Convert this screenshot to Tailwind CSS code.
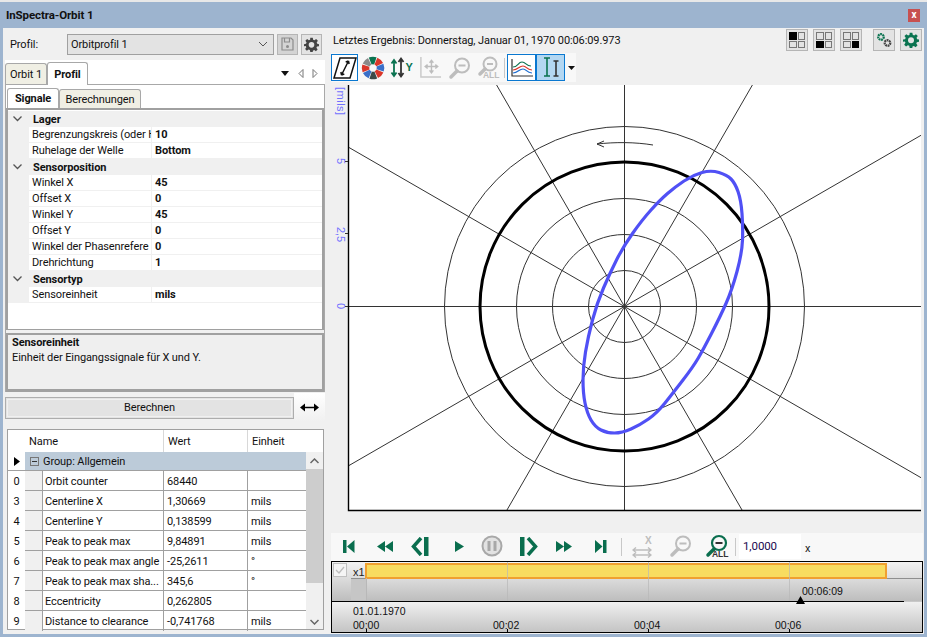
<!DOCTYPE html>
<html lang="de">
<head>
  <meta charset="UTF-8" />
  <title>InSpectra-Orbit 1</title>
  <script src="https://cdn.jsdelivr.net/npm/@tailwindcss/browser@4"></script>
</head>
<body class="m-0 overflow-hidden">
<div class="w-[927px] h-[637px] flex flex-col bg-[#9db4cf] font-['Roboto',sans-serif] text-[11px] tracking-[-0.1px] leading-none text-[#111] overflow-hidden border-t-2 border-t-[#e8e8e8]">

  <!-- Title bar -->
  <div class="h-[26px] shrink-0 flex items-center justify-between pl-[6px] pr-[7px]">
    <span class="font-bold text-[11.5px] mt-[1px]">InSpectra-Orbit 1</span>
    <span class="w-[12px] h-[13px] bg-[#c75050] text-white text-[10px] font-bold flex items-center justify-center">x</span>
  </div>

  <!-- Body -->
  <div class="flex-1 mx-[3px] mb-[3px] bg-[#f0f0f0] flex min-h-0">

    <!-- Left column -->
    <div class="w-[323px] shrink-0 pl-[2px] pr-[1px] flex flex-col">
      <div class="h-[32px] shrink-0 flex items-center gap-[2px]">
        <span class="w-[60px] pl-[5px]">Profil:</span>
        <div class="w-[207px] h-[21px] bg-[#e3e3e3] border border-[#a0a0a0] flex items-center justify-between pl-[3px] pr-[5px]">
          <span>Orbitprofil 1</span>
          <svg width="10" height="6" viewBox="0 0 10 6"><path d="M1 1l4 4 4-4" fill="none" stroke="#555" stroke-width="1"/></svg>
        </div>
        <div class="w-[21px] h-[21px] bg-[#d4d4d4] border border-[#b5b5b5] flex items-center justify-center ml-[1px]">
          <svg width="13" height="14" viewBox="0 0 13 14"><path d="M1 1h9l2 2v10H1z M3.500 1v4h5V1" fill="none" stroke="#8c8c8c" stroke-width="1.200"/><circle cx="6.500" cy="9.500" r="1.500" fill="#8c8c8c"/></svg>
        </div>
        <div class="w-[21px] h-[21px] bg-[#e3e3e3] border border-[#b5b5b5] flex items-center justify-center ml-[1px]">
          <svg width="15" height="15" viewBox="0 0 24 24"><path fill="#444" d="M10 1h4l.6 3.200 2.100.9 2.700-1.900 2.800 2.800-1.900 2.700.9 2.100L24 11.400v3.200l-3.200.6-.9 2.100 1.900 2.700-2.800 2.800-2.700-1.900-2.100.9L14 24h-4l-.6-3.200-2.100-.9-2.700 1.900-2.800-2.800 1.900-2.700-.9-2.100L0 14.600v-3.200l3.200-.6.9-2.100L2.200 6l2.800-2.800 2.700 1.900 2.100-.9z"/><circle cx="12" cy="12.500" r="4.500" fill="#e3e3e3"/></svg>
        </div>
      </div>

      <!-- Tab strip -->
      <div class="h-[24px] shrink-0 bg-white flex items-end relative">
        <div class="w-[42px] h-[21px] bg-[#f0efe4] border border-b-0 border-[#a8a8a8] rounded-t-[3px] flex items-center justify-center">Orbit 1</div>
        <div class="w-[41px] h-[23px] bg-white border border-b-0 border-[#a8a8a8] rounded-t-[3px] flex items-center justify-center font-bold relative top-[1px] z-10">Profil</div>
        <div class="ml-auto mb-[6px] mr-[7px] flex items-center gap-[8px]">
          <svg width="9" height="6" viewBox="0 0 9 6"><path d="M0 0h8L4 5z" fill="#111"/></svg>
          <svg width="6" height="9" viewBox="0 0 6 9"><path d="M5 .5v8L1 4.500z" fill="none" stroke="#777"/></svg>
          <svg width="6" height="9" viewBox="0 0 6 9"><path d="M1 .5v8l4-4z" fill="none" stroke="#777"/></svg>
        </div>
      </div>

      <!-- Property panel -->
      <div class="h-[308px] shrink-0 bg-white border-x border-t border-[#a8a8a8] flex flex-col pt-[3px]">
        <div class="h-[20px] shrink-0 flex items-end pl-[1px]">
          <div class="w-[52px] h-[20px] bg-white border border-b-0 border-[#a8a8a8] rounded-t-[3px] flex items-center justify-center font-bold">Signale</div>
          <div class="w-[82px] h-[19px] bg-[#f0efe4] border border-b-0 border-[#a8a8a8] rounded-t-[3px] flex items-center justify-center">Berechnungen</div>
        </div>
        <div class="h-[222px] shrink-0 border-2 border-[#a0a0a0] border-b bg-white pt-[1px]">
          <div class="grid grid-cols-[21px_122px_1fr] auto-rows-[16px] items-stretch">
            <div class="col-span-3 bg-[#f0f0f0] flex items-center font-bold"><span class="w-[25px] pl-[5px]"><svg width="9" height="6" viewBox="0 0 9 6"><path d="M.5.5l4 4 4-4" fill="none" stroke="#555" stroke-width="1.300"/></svg></span>Lager</div>
            <div class="bg-[#f0f0f0]"></div><div class="border-b border-[#f0f0f0] pl-[3px] flex items-center whitespace-nowrap overflow-hidden">Begrenzungskreis (oder H</div><div class="border-b border-l border-[#f0f0f0] pl-[3px] flex items-center font-bold">10</div>
            <div class="bg-[#f0f0f0]"></div><div class="border-b border-[#f0f0f0] pl-[3px] flex items-center">Ruhelage der Welle</div><div class="border-b border-l border-[#f0f0f0] pl-[3px] flex items-center font-bold">Bottom</div>
            <div class="col-span-3 bg-[#f0f0f0] flex items-center font-bold"><span class="w-[25px] pl-[5px]"><svg width="9" height="6" viewBox="0 0 9 6"><path d="M.5.5l4 4 4-4" fill="none" stroke="#555" stroke-width="1.300"/></svg></span>Sensorposition</div>
            <div class="bg-[#f0f0f0]"></div><div class="border-b border-[#f0f0f0] pl-[3px] flex items-center">Winkel X</div><div class="border-b border-l border-[#f0f0f0] pl-[3px] flex items-center font-bold">45</div>
            <div class="bg-[#f0f0f0]"></div><div class="border-b border-[#f0f0f0] pl-[3px] flex items-center">Offset X</div><div class="border-b border-l border-[#f0f0f0] pl-[3px] flex items-center font-bold">0</div>
            <div class="bg-[#f0f0f0]"></div><div class="border-b border-[#f0f0f0] pl-[3px] flex items-center">Winkel Y</div><div class="border-b border-l border-[#f0f0f0] pl-[3px] flex items-center font-bold">45</div>
            <div class="bg-[#f0f0f0]"></div><div class="border-b border-[#f0f0f0] pl-[3px] flex items-center">Offset Y</div><div class="border-b border-l border-[#f0f0f0] pl-[3px] flex items-center font-bold">0</div>
            <div class="bg-[#f0f0f0]"></div><div class="border-b border-[#f0f0f0] pl-[3px] flex items-center whitespace-nowrap overflow-hidden">Winkel der Phasenrefere</div><div class="border-b border-l border-[#f0f0f0] pl-[3px] flex items-center font-bold">0</div>
            <div class="bg-[#f0f0f0]"></div><div class="border-b border-[#f0f0f0] pl-[3px] flex items-center">Drehrichtung</div><div class="border-b border-l border-[#f0f0f0] pl-[3px] flex items-center font-bold">1</div>
            <div class="col-span-3 bg-[#f0f0f0] flex items-center font-bold"><span class="w-[25px] pl-[5px]"><svg width="9" height="6" viewBox="0 0 9 6"><path d="M.5.5l4 4 4-4" fill="none" stroke="#555" stroke-width="1.300"/></svg></span>Sensortyp</div>
            <div class="bg-[#f0f0f0]"></div><div class="border-b border-[#f0f0f0] pl-[3px] flex items-center">Sensoreinheit</div><div class="border-b border-l border-[#f0f0f0] pl-[3px] flex items-center font-bold">mils</div>
          </div>
        </div>
        <div class="h-[3px] shrink-0 bg-[#f0f0f0]"></div>
        <div class="flex-1 bg-[#efefef] border-x-2 border-t-2 border-b-[3px] border-[#a0a0a0] pl-[4px] pt-[2px]">
          <p class="font-bold mb-[4px]">Sensoreinheit</p>
          <p>Einheit der Eingangssignale für X und Y.</p>
        </div>
      </div>

      <!-- Berechnen -->
      <div class="h-[29px] mt-[1px] shrink-0 flex items-center">
        <div class="w-[289px] h-[22px] bg-[#e3e3e3] border border-[#adadad] outline outline-[#f0f0f0] -outline-offset-3 flex items-center justify-center">Berechnen</div>
        <div class="w-[31px] h-[29px] bg-gradient-to-b from-white to-[#f0f0f0] flex items-center justify-center">
          <svg width="19" height="9" viewBox="0 0 19 9"><path d="M3 4.500h13" stroke="#000" stroke-width="1.500"/><path d="M0 4.500L5 .5v8z M19 4.500L14 .5v8z" fill="#000"/></svg>
        </div>
      </div>

      <!-- Result table -->
      <div class="h-[201px] w-[317px] ml-[2px] mt-[7px] shrink-0 bg-white border border-[#a0a0a0] flex">
        <div class="w-[298px] shrink-0">
          <div class="h-[22px] grid grid-cols-[17px_139px_84px_1fr] [&>div]:pt-[1px]">
            <div></div>
            <div class="pl-[4px] flex items-center border-r border-[#d8d8d8]">Name</div>
            <div class="pl-[4px] flex items-center border-r border-[#d8d8d8]">Wert</div>
            <div class="pl-[4px] flex items-center">Einheit</div>
          </div>
          <div class="h-[19px] flex border-b border-[#a0a0a0]">
            <div class="w-[17px] flex items-center justify-center"><svg width="6" height="9" viewBox="0 0 6 9"><path d="M0 0l6 4.500L0 9z" fill="#000"/></svg></div>
            <div class="flex-1 bg-[#bccbd9] flex items-center pl-[5px] gap-[4px]">
              <span class="w-[9px] h-[9px] border border-[#777] flex items-center justify-center"><span class="w-[5px] h-[1px] bg-[#333]"></span></span>
              Group: Allgemein
            </div>
          </div>
          <div class="grid grid-cols-[17px_17px_122px_84px_1fr] auto-rows-[20px] whitespace-nowrap [&>div]:pt-[1px]">
            <div class="flex items-center justify-center">0</div><div class="bg-[#f0f0f0] border-b border-[#a0a0a0]"></div><div class="border-x border-b border-[#a0a0a0] pl-[2px] flex items-center">Orbit counter</div><div class="border-r border-b border-[#a0a0a0] pl-[3px] flex items-center">68440</div><div class="border-b border-[#a0a0a0] pl-[3px] flex items-center"></div>
            <div class="flex items-center justify-center">3</div><div class="bg-[#f0f0f0] border-b border-[#a0a0a0]"></div><div class="border-x border-b border-[#a0a0a0] pl-[2px] flex items-center">Centerline X</div><div class="border-r border-b border-[#a0a0a0] pl-[3px] flex items-center">1,30669</div><div class="border-b border-[#a0a0a0] pl-[3px] flex items-center">mils</div>
            <div class="flex items-center justify-center">4</div><div class="bg-[#f0f0f0] border-b border-[#a0a0a0]"></div><div class="border-x border-b border-[#a0a0a0] pl-[2px] flex items-center">Centerline Y</div><div class="border-r border-b border-[#a0a0a0] pl-[3px] flex items-center">0,138599</div><div class="border-b border-[#a0a0a0] pl-[3px] flex items-center">mils</div>
            <div class="flex items-center justify-center">5</div><div class="bg-[#f0f0f0] border-b border-[#a0a0a0]"></div><div class="border-x border-b border-[#a0a0a0] pl-[2px] flex items-center">Peak to peak max</div><div class="border-r border-b border-[#a0a0a0] pl-[3px] flex items-center">9,84891</div><div class="border-b border-[#a0a0a0] pl-[3px] flex items-center">mils</div>
            <div class="flex items-center justify-center">6</div><div class="bg-[#f0f0f0] border-b border-[#a0a0a0]"></div><div class="border-x border-b border-[#a0a0a0] pl-[2px] flex items-center">Peak to peak max angle</div><div class="border-r border-b border-[#a0a0a0] pl-[3px] flex items-center">-25,2611</div><div class="border-b border-[#a0a0a0] pl-[3px] flex items-center">°</div>
            <div class="flex items-center justify-center">7</div><div class="bg-[#f0f0f0] border-b border-[#a0a0a0]"></div><div class="border-x border-b border-[#a0a0a0] pl-[2px] flex items-center">Peak to peak max sha...</div><div class="border-r border-b border-[#a0a0a0] pl-[3px] flex items-center">345,6</div><div class="border-b border-[#a0a0a0] pl-[3px] flex items-center">°</div>
            <div class="flex items-center justify-center">8</div><div class="bg-[#f0f0f0] border-b border-[#a0a0a0]"></div><div class="border-x border-b border-[#a0a0a0] pl-[2px] flex items-center">Eccentricity</div><div class="border-r border-b border-[#a0a0a0] pl-[3px] flex items-center">0,262805</div><div class="border-b border-[#a0a0a0] pl-[3px] flex items-center"></div>
            <div class="flex items-center justify-center">9</div><div class="bg-[#f0f0f0]"></div><div class="border-x border-[#a0a0a0] pl-[2px] flex items-center">Distance to clearance</div><div class="border-r border-[#a0a0a0] pl-[3px] flex items-center">-0,741768</div><div class="pl-[3px] flex items-center">mils</div>
          </div>
        </div>
        <div class="flex-1 bg-[#f0f0f0] mt-[22px] flex flex-col">
          <div class="h-[17px] flex items-center justify-center"><svg width="9" height="6" viewBox="0 0 9 6"><path d="M.5 5l4-4 4 4" fill="none" stroke="#666" stroke-width="1.500"/></svg></div>
          <div class="h-[114px] bg-[#cdcdcd]"></div>
          <div class="flex-1 flex items-end justify-center pb-[4px]"><svg width="9" height="6" viewBox="0 0 9 6"><path d="M.5 1l4 4 4-4" fill="none" stroke="#666" stroke-width="1.500"/></svg></div>
        </div>
      </div>
    </div>

    <!-- Right column -->
    <div class="flex-1 min-w-0 flex flex-col pl-[5px]">
      <div class="h-[25px] shrink-0 flex items-start justify-between">
        <span class="mt-[7px] ml-[2px]">Letztes Ergebnis: Donnerstag, Januar 01, 1970 00:06:09.973</span>
        <div class="flex mt-[1px] mr-[2px]">
          <div class="w-[22px] h-[22px] bg-[#e3e3e3] border border-[#b5b5b5] grid grid-cols-2 gap-[1px] p-[2px]"><span class="bg-black"></span><span class="border border-[#777]"></span><span class="border border-[#777]"></span><span class="border border-[#777]"></span></div>
          <div class="w-[22px] h-[22px] ml-[5px] bg-[#e3e3e3] border border-[#b5b5b5] grid grid-cols-2 gap-[1px] p-[2px]"><span class="border border-[#777]"></span><span class="border border-[#777]"></span><span class="bg-black"></span><span class="border border-[#777]"></span></div>
          <div class="w-[22px] h-[22px] ml-[5px] bg-[#e3e3e3] border border-[#b5b5b5] grid grid-cols-2 gap-[1px] p-[2px]"><span class="border border-[#777]"></span><span class="border border-[#777]"></span><span class="border border-[#777]"></span><span class="bg-black"></span></div>
          <div class="w-[22px] h-[22px] ml-[11px] bg-[#e3e3e3] border border-[#b5b5b5] flex items-center justify-center">
            <svg width="16" height="16" viewBox="0 0 16 16"><circle cx="5" cy="5" r="2.800" fill="none" stroke="#0a7350" stroke-width="2.200" stroke-dasharray="1.800 .6"/><circle cx="11.500" cy="11" r="2.800" fill="none" stroke="#444" stroke-width="2.200" stroke-dasharray="1.800 .6"/></svg>
          </div>
          <div class="w-[22px] h-[22px] ml-[5px] bg-[#e3e3e3] border border-[#b5b5b5] flex items-center justify-center">
            <svg width="16" height="16" viewBox="0 0 24 24"><path fill="#0a7350" d="M10 1h4l.6 3.200 2.100.9 2.700-1.900 2.800 2.800-1.900 2.700.9 2.100L24 11.400v3.200l-3.200.6-.9 2.100 1.900 2.700-2.800 2.800-2.700-1.900-2.100.9L14 24h-4l-.6-3.200-2.100-.9-2.700 1.900-2.800-2.800 1.900-2.700-.9-2.100L0 14.600v-3.200l3.200-.6.9-2.100L2.200 6l2.800-2.800 2.700 1.900 2.100-.9z"/><circle cx="12" cy="12.500" r="4.500" fill="#e3e3e3"/></svg>
          </div>
        </div>
      </div>

      <!-- Chart toolbar -->
      <div class="w-[245px] h-[29px] shrink-0 bg-[#f8f8f8] flex items-center gap-[1px]">
        <div class="w-[27px] h-[27px] bg-white border border-[#0a78d0] flex items-center justify-center">
          <svg width="24" height="24" viewBox="0 0 24 24"><path d="M7 2h16L17 22H1z" fill="none" stroke="#111" stroke-width="1.500"/><path d="M15.500 5L8.500 19M15.500 5l-2.800 1M15.500 5l.6 3M8.500 19l2.800-1M8.500 19l-.6-3" fill="none" stroke="#111" stroke-width="1.500"/></svg>
        </div>
        <svg width="24" height="24" viewBox="0 0 24 24" class="ml-[2px]" fill="none" stroke-width="7.500">
          <circle cx="12" cy="12" r="7.500" pathLength="80" stroke-dasharray="9 71" stroke="#0a7350" transform="rotate(-112 12 12)"/>
          <circle cx="12" cy="12" r="7.500" pathLength="80" stroke-dasharray="9 71" stroke="#d9362a" transform="rotate(-67 12 12)"/>
          <circle cx="12" cy="12" r="7.500" pathLength="80" stroke-dasharray="9 71" stroke="#3a6fc8" transform="rotate(-22 12 12)"/>
          <circle cx="12" cy="12" r="7.500" pathLength="80" stroke-dasharray="9 71" stroke="#d9362a" transform="rotate(23 12 12)"/>
          <circle cx="12" cy="12" r="7.500" pathLength="80" stroke-dasharray="9 71" stroke="#3c4a48" transform="rotate(68 12 12)"/>
          <circle cx="12" cy="12" r="7.500" pathLength="80" stroke-dasharray="9 71" stroke="#3a6fc8" transform="rotate(113 12 12)"/>
          <circle cx="12" cy="12" r="7.500" pathLength="80" stroke-dasharray="9 71" stroke="#d9362a" transform="rotate(158 12 12)"/>
          <circle cx="12" cy="12" r="7.500" pathLength="80" stroke-dasharray="9 71" stroke="#8a8a8a" transform="rotate(203 12 12)"/>
        </svg>
        <svg width="24" height="24" viewBox="0 0 24 24" class="ml-[4px]" font-family="Liberation Sans" font-weight="bold" font-size="11" fill="#0a7350"><path d="M4 5v14M1.500 7.500L4 4l2.500 3.500M1.500 16.500L4 20l2.500-3.500" fill="none" stroke="#0a7350" stroke-width="1.800"/><path d="M11 3v17M8.500 6L11 2.500 13.500 6M8.500 17l2.500 3.500 2.500-3.500" fill="none" stroke="#333" stroke-width="1.800"/><text x="15.500" y="15">Y</text></svg>
        <svg width="23" height="23" viewBox="0 0 24 24" class="ml-[4px]"><path d="M2 1v21h21" fill="none" stroke="#c8c8c8" stroke-width="1.500"/><path d="M13 5v12M7 11h12M11 7l2-2.500L15 7M11 15l2 2.500 2-2.500M9 9l-2.500 2L9 13M17 9l2.500 2L17 13" fill="none" stroke="#bdbdbd" stroke-width="1.500"/></svg>
        <svg width="24" height="24" viewBox="0 0 24 24" class="ml-[5px]"><circle cx="14" cy="9.500" r="7" fill="none" stroke="#bdbdbd" stroke-width="2"/><path d="M10.500 9.500h7" stroke="#bdbdbd" stroke-width="2"/><path d="M9 15l-6 6" stroke="#bdbdbd" stroke-width="3.500" stroke-linecap="round"/></svg>
        <div class="relative w-[24px] h-[24px] ml-[4px]">
          <svg width="24" height="24" viewBox="0 0 24 24"><circle cx="13" cy="8" r="6.500" fill="none" stroke="#bdbdbd" stroke-width="2"/><path d="M10 8h6" stroke="#bdbdbd" stroke-width="2"/><path d="M8 13l-5 5" stroke="#bdbdbd" stroke-width="3.500" stroke-linecap="round"/></svg>
          <span class="absolute left-[6px] top-[15px] text-[8.500px] font-bold text-[#bdbdbd] font-['Liberation_Sans',sans-serif]">ALL</span>
        </div>
        <div class="w-[1px] h-[20px] bg-[#c8c8c8] ml-[2px]"></div>
        <div class="w-[29px] h-[27px] ml-[1px] bg-white border border-[#0a78d0] flex items-center justify-center">
          <svg width="24" height="20" viewBox="0 0 24 20"><path d="M2 1v17h21" fill="none" stroke="#333" stroke-width="1.200"/><path d="M3 9c5 0 5-5 9-5s4 4 9 4" fill="none" stroke="#0a7350" stroke-width="1.200"/><path d="M3 12c5 0 6-4 10-4s3 4 9 4" fill="none" stroke="#d9362a" stroke-width="1.200"/><path d="M3 15c5 0 6-4 10-4s3 4 9 4" fill="none" stroke="#1f6fd0" stroke-width="1.200"/></svg>
        </div>
        <div class="w-[29px] h-[27px] -ml-[1px] bg-[#b3d7f2] border border-[#0a78d0] flex items-center justify-center">
          <svg width="20" height="23" viewBox="0 0 20 23"><path d="M6 2v18M3 2h6M3 20h6" fill="none" stroke="#0a7350" stroke-width="1.600"/><path d="M15 5v15M12.500 5h5M12.500 20h5" fill="none" stroke="#333" stroke-width="1.600"/></svg>
        </div>
        <svg width="7" height="4" viewBox="0 0 7 4" class="ml-[2px]"><path d="M0 0h7L3.500 4z" fill="#111"/></svg>
      </div>

      <!-- Plot -->
      <div class="flex-1 min-h-0 relative">
        <svg width="591" height="451" viewBox="331 82 591 451" class="block" font-family="Liberation Sans" font-size="11" fill="#7070ff">
          <rect x="349" y="85" width="572" height="426" fill="#fff"/>
          <g fill="none" stroke="#333" stroke-width="1">
            <clipPath id="plotclip"><rect x="349" y="85" width="572" height="425"/></clipPath>
            <g clip-path="url(#plotclip)">
              <path d="M349 306.500H921M624.500 85V511"/>
              <path d="M349 147.500L921 477.700M349 465.500L921 135.300"/>
              <path d="M496.600 85L742.600 511M752.400 85L506.400 511"/>
              <circle cx="624.500" cy="306.500" r="36"/>
              <circle cx="624.500" cy="306.500" r="72"/>
              <circle cx="624.500" cy="306.500" r="108"/>
              <circle cx="624.500" cy="306.500" r="180"/>
              <circle cx="624.500" cy="306.500" r="144.500" stroke="#000" stroke-width="3"/>
              <path d="M653 145C635 142 615 142 597 144M604 141L597 144L604 147"/>
              <path id="orbit" stroke="#5050f5" stroke-width="3.200" stroke-linejoin="round"/>
            </g>
          </g>
          <path d="M348.500 85V510.500H921" fill="none" stroke="#000" stroke-width="1.400"/>
          <path d="M345 161.500h3M345 233.500h3M345 306.500h3" stroke="#333"/>
          <text transform="translate(337,87) rotate(90)" style="letter-spacing:.5px">[mils]</text>
          <text transform="translate(337,158) rotate(90)">5</text>
          <text transform="translate(337,227) rotate(90)">2,5</text>
          <text transform="translate(337,303) rotate(90)">0</text>
        </svg>
      </div>

      <!-- Transport toolbar -->
      <div class="h-[28px] shrink-0 mr-[1px] bg-[#f8f8f8] relative">
        <svg class="absolute left-[12px] top-[7px]" width="12" height="13" viewBox="0 0 12 13"><path d="M0 0h3.500v13H0zM11.500 0v13L4 6.500z" fill="#0a6e4e"/></svg>
        <svg class="absolute left-[46px] top-[8px]" width="16" height="11" viewBox="0 0 16 11"><path d="M8 0v11L0 5.500zM16 0v11L8 5.500z" fill="#0a6e4e"/></svg>
        <svg class="absolute left-[80px] top-[4px]" width="18" height="19" viewBox="0 0 18 19"><path d="M10 1L2.500 9.500 10 18" fill="none" stroke="#0a6e4e" stroke-width="3.500"/><path d="M13 0h4.500v19H13z" fill="#0a6e4e"/></svg>
        <svg class="absolute left-[124px] top-[8px]" width="9" height="11" viewBox="0 0 9 11"><path d="M0 0l9 5.500L0 11z" fill="#0a6e4e"/></svg>
        <svg class="absolute left-[150px] top-[2px]" width="22" height="22" viewBox="0 0 22 22"><circle cx="11" cy="11" r="9.500" fill="#e2e2e2" stroke="#a8a8a8" stroke-width="2"/><path d="M8 6v10M14 6v10" stroke="#a8a8a8" stroke-width="3"/></svg>
        <svg class="absolute left-[189px] top-[4px]" width="18" height="19" viewBox="0 0 18 19"><path d="M8 1l7.500 8.500L8 18" fill="none" stroke="#0a6e4e" stroke-width="3.500"/><path d="M0 0h4.500v19H0z" fill="#0a6e4e"/></svg>
        <svg class="absolute left-[225px] top-[8px]" width="16" height="11" viewBox="0 0 16 11"><path d="M0 0v11l8-5.500zM8 0v11l8-5.500z" fill="#0a6e4e"/></svg>
        <svg class="absolute left-[264px] top-[7px]" width="12" height="13" viewBox="0 0 12 13"><path d="M0 0v13l7.500-6.500zM8 0h3.500v13H8z" fill="#0a6e4e"/></svg>
        <div class="absolute left-[290px] top-[5px] w-[1px] h-[18px] bg-[#c8c8c8]"></div>
        <svg class="absolute left-[301px] top-[14px]" width="20" height="11" viewBox="0 0 20 11"><path d="M1 3h18M1 8h18M4 .5L1 3l3 2.500M16 .5L19 3l-3 2.500M4 5.500L1 8l3 2.500M16 5.500L19 8l-3 2.500" fill="none" stroke="#bdbdbd" stroke-width="1.400"/></svg>
        <span class="absolute left-[314px] top-[3px] font-bold text-[10px] text-[#bdbdbd] font-['Liberation_Sans',sans-serif]">X</span>
        <svg class="absolute left-[338px] top-[1px]" width="24" height="24" viewBox="0 0 24 24"><circle cx="14" cy="9.500" r="7" fill="none" stroke="#bdbdbd" stroke-width="2"/><path d="M10.500 9.500h7" stroke="#bdbdbd" stroke-width="2"/><path d="M9 15l-6 6" stroke="#bdbdbd" stroke-width="3.500" stroke-linecap="round"/></svg>
        <div class="absolute left-[374px] top-[1px] w-[26px] h-[25px]">
          <svg width="24" height="24" viewBox="0 0 24 24"><circle cx="14" cy="9" r="7" fill="none" stroke="#0a6e4e" stroke-width="2.200"/><path d="M10.500 9h7" stroke="#333" stroke-width="2"/><path d="M9 15l-6 6" stroke="#0a6e4e" stroke-width="3.500" stroke-linecap="round"/></svg>
          <span class="absolute left-[7px] top-[16px] text-[8.500px] font-bold text-[#333] font-['Liberation_Sans',sans-serif]">ALL</span>
        </div>
        <div class="absolute left-[404px] top-[5px] w-[1px] h-[18px] bg-[#c8c8c8]"></div>
        <div class="absolute left-[408px] top-[1px] w-[62px] h-[25px] bg-white flex items-center pl-[4px] text-[#1a0a50] text-[11.5px]">1,0000</div>
        <span class="absolute left-[474px] top-[10px] text-[#222]">x</span>
      </div>

      <!-- Timeline -->
      <div class="h-[72px] w-[592px] mb-[1px] shrink-0 border border-black relative overflow-hidden text-[10.500px] tracking-normal font-['Liberation_Sans',sans-serif]">
        <div class="absolute inset-x-0 top-0 h-[39px] bg-gradient-to-b from-[#f2f2f2] via-[#d8d8d8] to-[#bdbdbd]"></div>
        <div class="absolute inset-x-0 top-[39px] bottom-0 bg-gradient-to-b from-[#f0f0f0] to-[#c4c4c4] border-t border-black"></div>
        <div class="absolute left-[19px] top-[16px] right-0 h-[1px] bg-[#8f8f8f]"></div>
        <div class="absolute left-[1px] top-[1px] w-[14px] h-[14px] bg-[#f5f5f5] border border-[#c0c0c0] flex items-center justify-center"><svg width="10" height="8" viewBox="0 0 10 8"><path d="M1 4l3 3 5-6" fill="none" stroke="#bdbdbd" stroke-width="1.300"/></svg></div>
        <span class="absolute left-[21px] top-[5px] text-[11px] text-[#222]">x1</span>
        <div class="absolute left-[19px] top-[17px] w-[15px] h-[21px] bg-[#c6c6c6]"></div>
        <div class="absolute left-[33px] top-[1px] w-[522px] h-[16px] bg-[#f8dc60] border-2 border-[#f0a030]"></div>
        <div class="absolute left-[34px] top-[16px] h-[23px] w-[1px] bg-[#b8b8b8]"></div>
        <div class="absolute left-[175px] top-0 h-[39px] w-[1px] bg-[#b8b8b8]/70"></div>
        <div class="absolute left-[316px] top-0 h-[39px] w-[1px] bg-[#b8b8b8]/70"></div>
        <div class="absolute left-[457px] top-0 h-[39px] w-[1px] bg-[#b8b8b8]/70"></div>
        <div class="absolute left-[572px] top-[39px] right-0 h-[1px] bg-[#c8c8c8]"></div>
        <span class="absolute left-[21px] top-[44px]">01.01.1970</span>
        <span class="absolute left-[21px] top-[58px]">00:00</span>
        <span class="absolute left-[161px] top-[58px]">00:02</span>
        <span class="absolute left-[302px] top-[58px]">00:04</span>
        <span class="absolute left-[443px] top-[58px]">00:06</span>
        <div class="absolute left-[34px] bottom-0 w-[1px] h-[3px] bg-black"></div>
        <div class="absolute left-[175px] bottom-0 w-[1px] h-[3px] bg-black"></div>
        <div class="absolute left-[316px] bottom-0 w-[1px] h-[3px] bg-black"></div>
        <div class="absolute left-[457px] bottom-0 w-[1px] h-[3px] bg-black"></div>
        <span class="absolute left-[470px] top-[24px]">00:06:09</span>
        <svg class="absolute left-[464px] top-[34px]" width="9" height="8" viewBox="0 0 9 8"><path d="M4.500 0L9 8H0z" fill="#000"/></svg>
      </div>
    </div>
  </div>
</div>
<script>
  // orbit trace, smoothed through the midpoints of the sampled points
  const pts = [[711,170],[727,175],[735,183],[741,200],[743,227],[742,253],[732,290],[720,317],[703,350],[693,367],[673,393],[657,413],[640,425],[622,433],[607,433],[595,427],[587,413],[583,393],[583,367],[588,337],[597,303],[610,273],[623,247],[642,220],[660,200],[675,187],[693,175]];
  const mid = (a, b) => [(a[0] + b[0]) / 2, (a[1] + b[1]) / 2];
  let d = "M" + mid(pts[pts.length - 1], pts[0]).join(" ");
  pts.forEach((p, i) => {
    d += " Q" + p.join(" ") + " " + mid(p, pts[(i + 1) % pts.length]).join(" ");
  });
  document.getElementById("orbit").setAttribute("d", d + "Z");
</script>
</body>
</html>
